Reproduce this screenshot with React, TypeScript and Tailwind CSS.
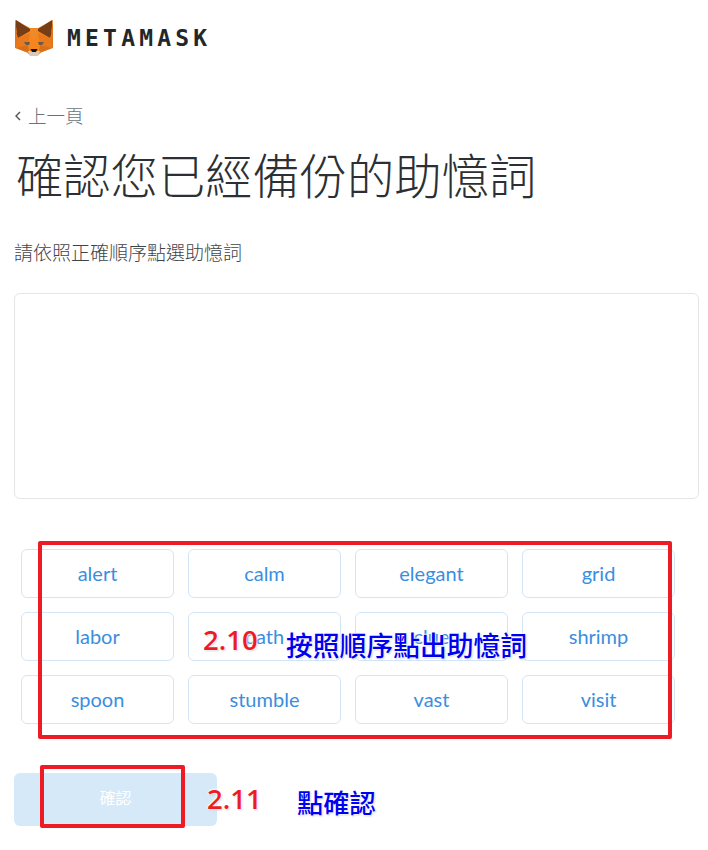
const words = [
  "alert", "calm", "elegant", "grid",
  "labor", "path", "clue", "shrimp",
  "spoon", "stumble", "vast", "visit",
];

const outline = "[text-shadow:0_0_2px_#fff,0_0_2px_#fff,0_0_3px_#fff,1px_1px_2px_rgba(0,0,0,0.25)]";

function Fox() {
  return (
    <svg width="40" height="38" viewBox="0 0 40 38">
      <polygon points="1,2 16,10 24,10 39,2 38,17 39,30 28,34 24,37 16,37 12,34 1,30 2,17" fill="#f6851b" />
      <polygon points="2,2 16,11 16,13 4,20 2,14" fill="#763d16" />
      <polygon points="38,2 24,11 24,13 36,20 38,14" fill="#763d16" />
      <polygon points="1,2 3,14 2,17 4,20 2,30 1,30 1,17" fill="#e2761b" />
      <polygon points="39,2 37,14 38,17 36,20 38,30 39,30 39,17" fill="#e2761b" />
      <polygon points="16,11 24,11 24,15 20,22 16,15" fill="#ef8a2a" />
      <polygon points="4,20 16,15 14,27 2,30" fill="#e8791d" />
      <polygon points="36,20 24,15 26,27 38,30" fill="#e8791d" />
      <polygon points="10,24 16,24 15,27 12,27" fill="#6b5a4c" />
      <polygon points="30,24 24,24 25,27 28,27" fill="#6b5a4c" />
      <polygon points="2,30 14,27 15,33 12,34" fill="#d7701a" />
      <polygon points="38,30 26,27 25,33 28,34" fill="#d7701a" />
      <polygon points="14,33 26,33 24,38 16,38" fill="#d9c7ba" />
      <polygon points="16.5,31 23.5,31 22,34 18,34" fill="#161616" />
    </svg>
  );
}

export default function App() {
  return (
    <div className="relative w-[708px] h-[850px] bg-white overflow-hidden font-['Noto_Sans_CJK_TC','Noto_Sans',sans-serif]">
      <div className="pt-[18px] px-[14px]">
        <div className="flex items-center gap-[13px] h-[38px]">
          <Fox />
          <span className="mt-[2px] font-['DejaVu_Sans_Mono',monospace] font-bold text-[23px] tracking-[4.2px] text-[#24272a]">METAMASK</span>
        </div>

        <div className="flex items-center gap-[7px] ml-[1px] mt-[46px] h-[26px] text-[#6a737d]">
          <svg width="6" height="10" viewBox="0 0 6 10" fill="none" stroke="#4d5257" strokeWidth="1.4" className="mt-[1px]">
            <path d="M5 1 1 5l4 4" />
          </svg>
          <span className="text-[18.5px] font-light leading-none">上一頁</span>
        </div>

        <h1 className="mt-[13px] ml-[2px] h-[66px] text-[47.3px] leading-[66px] font-light text-[#2c3034]">確認您已經備份的助憶詞</h1>

        <p className="mt-[31px] h-[28px] text-[19px] leading-[28px] font-light text-[#3f4448]">請依照正確順序點選助憶詞</p>

        <div className="mt-[27px] w-[685px] h-[206px] border border-[#e3e6e9] rounded-md" />

        <div className="mt-[50px] ml-[7px] w-[654px] grid grid-cols-4 gap-[14px]">
          {words.map((w) => (
            <button key={w} className="h-[49px] pb-[2px] border border-[#d3e6f7] rounded-md text-[20px] text-[#3a8ee0] font-['Lato',sans-serif]">
              {w}
            </button>
          ))}
        </div>

        <button className="mt-[49px] w-[203px] h-[53px] pb-[6px] rounded-md bg-[#d6e9f8] text-white text-[16px]">確認</button>
      </div>

      <div className="absolute left-[38px] top-[541px] w-[634px] h-[198px] border-[4px] border-[#ed1c24] rounded-[2px]" />
      <div className="absolute left-[40px] top-[765px] w-[145px] h-[63px] border-[4px] border-[#ed1c24] rounded-[2px]" />

      <span className={`absolute left-[203px] top-[621px] text-[27.5px] leading-[38px] font-semibold text-[#ed1c24] font-['Open_Sans',sans-serif] ${outline}`}>2.10</span>
      <span className={`absolute left-[286px] top-[628px] text-[26.8px] leading-[34px] font-medium text-[#0000f0] ${outline}`}>按照順序點出助憶詞</span>
      <span className={`absolute left-[207px] top-[780px] text-[27.5px] leading-[38px] font-semibold text-[#ed1c24] font-['Open_Sans',sans-serif] ${outline}`}>2.11</span>
      <span className={`absolute left-[297px] top-[785px] text-[26.3px] leading-[34px] font-medium text-[#0000f0] ${outline}`}>點確認</span>
    </div>
  );
}
